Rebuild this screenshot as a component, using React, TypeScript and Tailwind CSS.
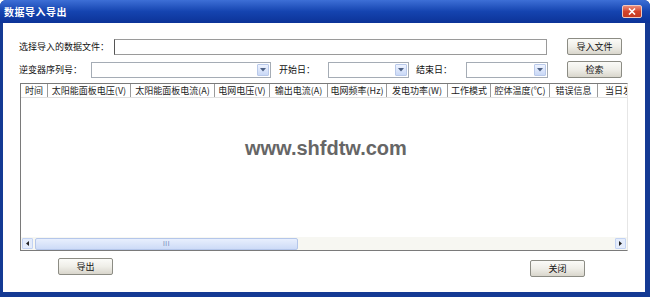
import React from "react";

const cjk = { fontFamily: '"Noto Sans CJK SC", "Noto Sans", sans-serif' };

function Btn({ label, className = "" }: { label: string; className?: string }) {
  return (
    <div
      className={`flex items-center justify-center rounded-[2px] border border-[#8c8c84] bg-gradient-to-b from-[#fbfbf8] via-[#efeee8] to-[#d9d6cc] text-[9px] text-[#111] ${className}`}
    >
      {label}
    </div>
  );
}

function Combo({ className = "" }: { className?: string }) {
  return (
    <div className={`flex h-[16px] items-center justify-end border border-[#a5acb5] bg-white pr-[1px] ${className}`}>
      <div className="flex h-[12px] w-[12px] items-center justify-center rounded-[1px] border border-[#b9c9ea] bg-gradient-to-b from-[#eef3ff] to-[#c9d8f6]">
        <svg width="6" height="4" viewBox="0 0 6 4">
          <path d="M0 0 L6 0 L3 3.5 Z" fill="#4d6185" />
        </svg>
      </div>
    </div>
  );
}

const cols: [string, number][] = [
  ["时间", 27],
  ["太阳能面板电压(V)", 83],
  ["太阳能面板电流(A)", 84],
  ["电网电压(V)", 55],
  ["输出电流(A)", 58],
  ["电网频率(Hz)", 59],
  ["发电功率(W)", 61],
  ["工作模式", 43],
  ["腔体温度(℃)", 59],
  ["错误信息", 48],
  ["当日发电量", 60],
];

export default function App() {
  return (
    <div className="h-[297px] w-[650px] overflow-hidden" style={cjk}>
      <div className="flex h-[297px] w-[650px] flex-col rounded-t-[6px] bg-[#143a94]">
        <div className="flex h-[23px] shrink-0 items-center justify-between rounded-t-[6px] bg-gradient-to-b from-[#3d6fd6] via-[#1544b0] to-[#0c3398] pl-[4px] pr-[8px]">
          <span className="text-[10px] font-bold tracking-[0.5px] text-white">数据导入导出</span>
          <div className="flex h-[13px] w-[20px] items-center justify-center rounded-[2px] border border-[#f0c8c0] bg-gradient-to-b from-[#ec8a78] via-[#d4442c] to-[#c43a22]">
            <svg width="8" height="7" viewBox="0 0 8 7">
              <path d="M1 0.5 L7 6.5 M7 0.5 L1 6.5" stroke="white" strokeWidth="1.6" />
            </svg>
          </div>
        </div>
        <div className="relative mb-[5px] ml-[3px] mr-[5px] flex flex-1 flex-col bg-white pl-[16px] pt-[15px] text-[9px] text-[#111]">
          <div className="flex h-[17px] items-center">
            <span className="w-[95px]">选择导入的数据文件：</span>
            <div className="h-[16px] w-[433px] border border-[#9a9a9a] border-l-[#555] bg-white" />
            <Btn label="导入文件" className="ml-[20px] h-[17px] w-[55px]" />
          </div>
          <div className="mt-[6px] flex h-[17px] items-center">
            <span className="w-[72px]">逆变器序列号：</span>
            <Combo className="w-[180px]" />
            <span className="ml-[8px] w-[49px]">开始日：</span>
            <Combo className="w-[81px]" />
            <span className="ml-[7px] w-[50px]">结束日：</span>
            <Combo className="w-[82px]" />
            <Btn label="检索" className="ml-[19px] h-[17px] w-[55px]" />
          </div>
          <div className="ml-[1px] mt-[5px] flex h-[168px] w-[608px] flex-col border border-[#7a7a7a] border-r-[#e6e6e6]">
            <div className="flex h-[14px] shrink-0 overflow-hidden border-b border-[#e0e0e0]">
              {cols.map(([t, w]) => (
                <div
                  key={t}
                  className="flex shrink-0 items-center justify-center whitespace-nowrap border-r border-[#9b9b9b] text-[9px] leading-none text-[#222]"
                  style={{ width: w }}
                >
                  {t}
                </div>
              ))}
            </div>
            <div className="flex-1" />
            <div className="flex h-[13px] shrink-0 items-center bg-[#f7f7f2] px-[1px]">
              <div className="flex h-[11px] w-[11px] items-center justify-center rounded-[1px] border border-[#c3d3f3] bg-[#e4ecfb]">
                <svg width="3" height="5" viewBox="0 0 3 5">
                  <path d="M3 0 L0 2.5 L3 5 Z" fill="#222" />
                </svg>
              </div>
              <div className="ml-[2px] flex h-[12px] w-[263px] items-center justify-center rounded-[2px] border border-[#b4c6ea] bg-gradient-to-b from-[#e8effd] to-[#cddbf7]">
                <span className="text-[6px] leading-none tracking-[0.5px] text-[#6880b0]">III</span>
              </div>
              <div className="flex-1" />
              <div className="flex h-[11px] w-[11px] items-center justify-center rounded-[1px] border border-[#c3d3f3] bg-[#e4ecfb]">
                <svg width="3" height="5" viewBox="0 0 3 5">
                  <path d="M0 0 L3 2.5 L0 5 Z" fill="#222" />
                </svg>
              </div>
            </div>
          </div>
          <div className="mt-[7px] flex items-start">
            <Btn label="导出" className="ml-[39px] h-[17px] w-[55px]" />
            <Btn label="关闭" className="ml-[417px] mt-[2px] h-[17px] w-[55px]" />
          </div>
          <div
            className="pointer-events-none absolute left-[242px] top-[115px] text-[20px] font-bold leading-none text-[#666]"
            style={{ fontFamily: '"Liberation Sans", Arial, sans-serif' }}
          >
            www.shfdtw.com
          </div>
        </div>
      </div>
    </div>
  );
}
